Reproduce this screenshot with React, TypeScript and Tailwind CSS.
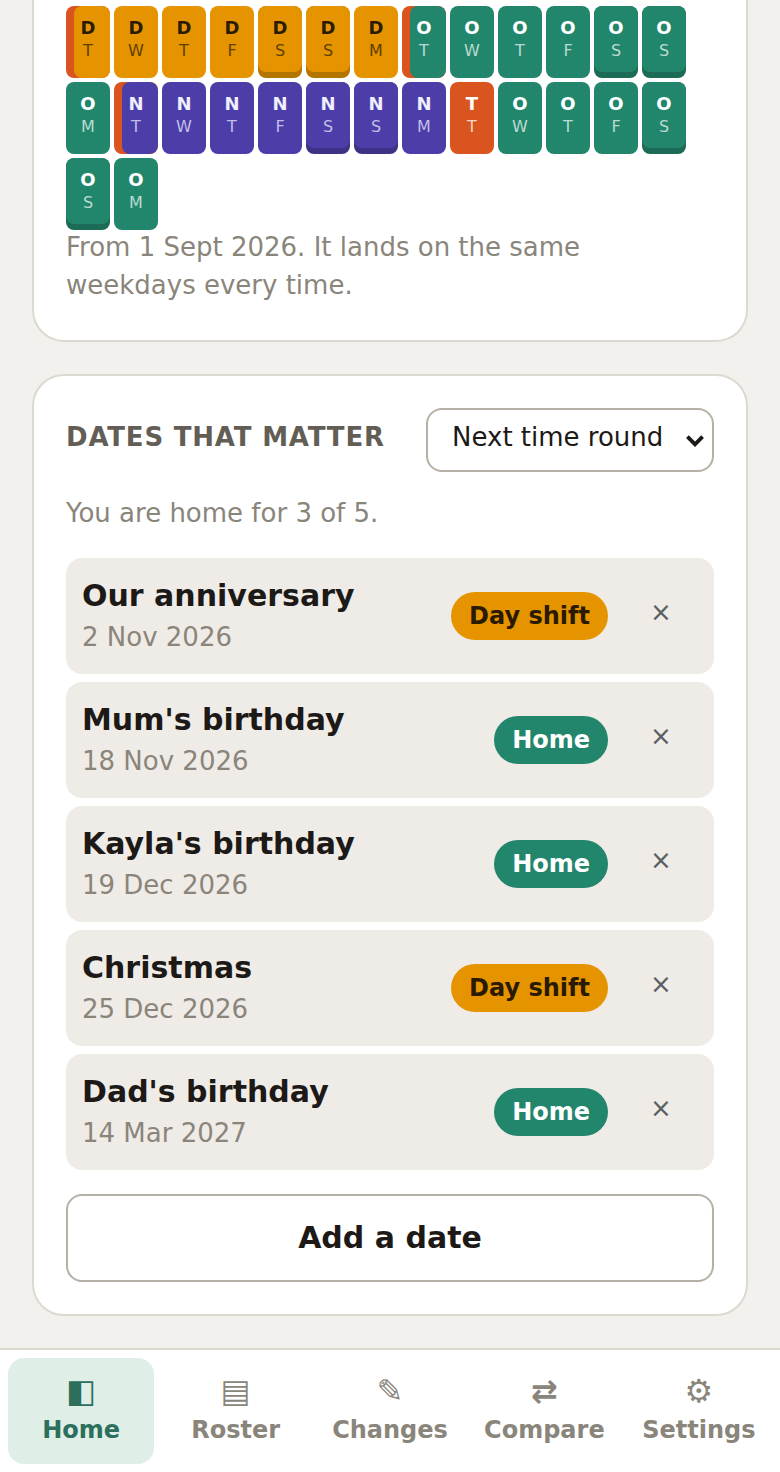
const font = '[font-family:"DejaVu_Sans",sans-serif]';

type Shift = "D" | "N" | "O" | "T";

const shiftStyles: Record<Shift, { bg: string; edge: string; letter: string; day: string }> = {
	D: { bg: "bg-[#e59400]", edge: "bg-[#b37400]", letter: "text-[#2a1a00]", day: "text-[#5f3f00]" },
	N: { bg: "bg-[#4c3ea8]", edge: "bg-[#3d3286]", letter: "text-[#f1efff]", day: "text-[#c4bde8]" },
	O: { bg: "bg-[#22866c]", edge: "bg-[#1b6b56]", letter: "text-white", day: "text-[#b9dcd0]" },
	T: { bg: "bg-[#d9541e]", edge: "bg-[#d9541e]", letter: "text-white", day: "text-[#f6d5c6]" },
};

const cells: { s: Shift; d: string; change?: boolean }[][] = [
	[
		{ s: "D", d: "T", change: true },
		{ s: "D", d: "W" },
		{ s: "D", d: "T" },
		{ s: "D", d: "F" },
		{ s: "D", d: "S" },
		{ s: "D", d: "S" },
		{ s: "D", d: "M" },
		{ s: "O", d: "T", change: true },
		{ s: "O", d: "W" },
		{ s: "O", d: "T" },
		{ s: "O", d: "F" },
		{ s: "O", d: "S" },
		{ s: "O", d: "S" },
	],
	[
		{ s: "O", d: "M" },
		{ s: "N", d: "T", change: true },
		{ s: "N", d: "W" },
		{ s: "N", d: "T" },
		{ s: "N", d: "F" },
		{ s: "N", d: "S" },
		{ s: "N", d: "S" },
		{ s: "N", d: "M" },
		{ s: "T", d: "T" },
		{ s: "O", d: "W" },
		{ s: "O", d: "T" },
		{ s: "O", d: "F" },
		{ s: "O", d: "S" },
	],
	[
		{ s: "O", d: "S" },
		{ s: "O", d: "M" },
	],
];

const dates = [
	{ name: "Our anniversary", date: "2 Nov 2026", status: "Day shift" },
	{ name: "Mum's birthday", date: "18 Nov 2026", status: "Home" },
	{ name: "Kayla's birthday", date: "19 Dec 2026", status: "Home" },
	{ name: "Christmas", date: "25 Dec 2026", status: "Day shift" },
	{ name: "Dad's birthday", date: "14 Mar 2027", status: "Home" },
];

const tabs = [
	{ icon: "◧", label: "Home", active: true },
	{ icon: "▤", label: "Roster" },
	{ icon: "✎", label: "Changes" },
	{ icon: "⇄", label: "Compare" },
	{ icon: "⚙", label: "Settings" },
];

function Cell({ s, d, change }: { s: Shift; d: string; change?: boolean }) {
	const st = shiftStyles[s];
	const weekend = d === "S";
	return (
		<div
			className={`relative flex h-[72px] w-[44px] flex-col items-center overflow-hidden rounded-lg pt-2.5 ${
				change ? "bg-[#d9541e]" : weekend ? st.edge : st.bg
			}`}
		>
			{(change || weekend) && (
				<div
					className={`absolute top-0 right-0 rounded-lg ${st.bg} ${change ? "bottom-0 left-2" : "bottom-1.5 left-0"}`}
				/>
			)}
			<span className={`relative text-[18px] leading-[24px] font-bold ${st.letter}`}>{s}</span>
			<span className={`relative text-[16px] leading-[22px] ${st.day}`}>{d}</span>
		</div>
	);
}

function DateRow({ name, date, status }: { name: string; date: string; status: string }) {
	const home = status === "Home";
	return (
		<div className="flex h-[116px] items-center rounded-2xl bg-[#efece7] pl-4">
			<div className="min-w-0 flex-1">
				<div className="text-[30px] leading-[42px] font-bold text-[#1c1917]">{name}</div>
				<div className="text-[26px] leading-[40px] text-[#8a857b]">{date}</div>
			</div>
			<span
				className={`flex h-12 items-center rounded-full px-[18px] text-[24px] font-bold ${
					home ? "bg-[#22866c] text-white" : "bg-[#e59400] text-[#2a1a00]"
				}`}
			>
				{status}
			</span>
			<button className="mr-4 ml-4 w-[74px] -translate-y-1 text-center text-[26px] leading-none text-[#5b5f63]">
				×
			</button>
		</div>
	);
}

export default function App() {
	return (
		<div className={`flex h-screen flex-col overflow-hidden bg-[#f3f1ed] ${font}`}>
			<main className="flex min-h-0 flex-1 flex-col justify-end gap-8 px-8 pb-8">
				<section className="rounded-b-[32px] border-2 border-t-0 border-[#ddd9d0] bg-white px-8 pt-1.5 pb-9">
					<div className="flex flex-col gap-1">
						{cells.map((row, i) => (
							<div key={i} className="flex gap-1">
								{row.map((c, j) => (
									<Cell key={j} {...c} />
								))}
							</div>
						))}
					</div>
					<p className="-mt-0.5 text-[26px] leading-[38px] text-[#8a857b]">
						From 1 Sept 2026. It lands on the same weekdays every time.
					</p>
				</section>

				<section className="shrink-0 rounded-[32px] border-2 border-[#ddd9d0] bg-white p-8">
					<div className="flex items-start justify-between">
						<h2 className="pt-2.5 text-[26px] leading-[38px] font-bold tracking-[0.8px] text-[#625e56] uppercase">
							Dates that matter
						</h2>
						<div className="relative h-16 w-[288px] rounded-2xl border-2 border-[#b5b1a6] bg-white">
							<select className="h-full w-full appearance-none bg-transparent pb-1.5 pl-6 text-[26px] text-[#1c1917] outline-none">
								<option>Next time round</option>
							</select>
							<svg
								viewBox="0 0 18 12"
								className="pointer-events-none absolute top-6 right-[7px] h-[13px] w-5"
								fill="none"
								stroke="#1c1917"
								strokeWidth="3.6"
							>
								<path d="M2 2.5 9 9.5 16 2.5" />
							</svg>
						</div>
					</div>
					<p className="mt-[22px] text-[26px] leading-[38px] text-[#8a857b]">You are home for 3 of 5.</p>
					<div className="mt-[26px] flex flex-col gap-2">
						{dates.map((d) => (
							<DateRow key={d.name} {...d} />
						))}
					</div>
					<button className="mt-6 h-[88px] w-full rounded-2xl border-2 border-[#b5b1a6] bg-white pb-0.5 text-[30px] font-bold text-[#1c1917]">
						Add a date
					</button>
				</section>
			</main>

			<nav className="grid shrink-0 grid-cols-5 gap-2 border-t-2 border-[#ddd9d0] bg-white p-2">
				{tabs.map((t) => (
					<div
						key={t.label}
						className={`flex h-[106px] flex-col items-center justify-center rounded-2xl pb-1.5 font-bold ${
							t.active ? "bg-[#e0eee8] text-[#2b6f5c]" : "text-[#8a857b]"
						}`}
					>
						<span className="text-[32px] leading-[44px]">{t.icon}</span>
						<span className="text-[24px] leading-[34px]">{t.label}</span>
					</div>
				))}
			</nav>
		</div>
	);
}
